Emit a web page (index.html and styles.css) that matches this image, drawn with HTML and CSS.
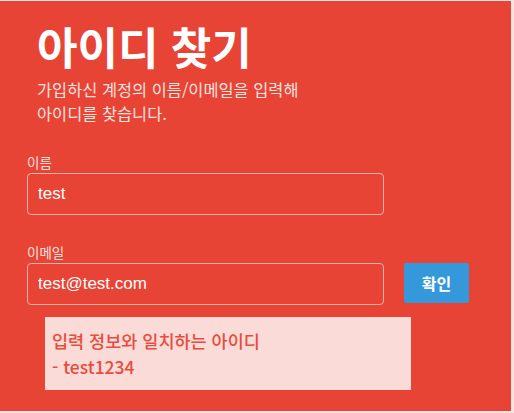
FILE: index.html
```html
<!DOCTYPE html>
<html lang="ko">
<head>
<meta charset="utf-8">
<link rel="stylesheet" href="styles.css">
</head>
<body>
<main class="page">
  <header class="head">
    <h1 class="title">아이디 찾기</h1>
    <p class="desc">가입하신 계정의 이름/이메일을 입력해<br>아이디를 찾습니다.</p>
  </header>
  <form class="form">
    <label class="field">
      <span class="label">이름</span>
      <span class="row"><input class="input" type="text" value="test"></span>
    </label>
    <label class="field">
      <span class="label">이메일</span>
      <span class="row"><input class="input" type="text" value="test@test.com"><button class="btn" type="button">확인</button></span>
    </label>
  </form>
  <div class="result">
    <p>입력 정보와 일치하는 아이디</p>
    <p>- test1234</p>
  </div>
</main>
</body>
</html>
```
FILE: styles.css
```css
html, body {
  margin: 0;
  padding: 0;
}
body {
  background: #f9e3e1;
  width: 514px;
  height: 413px;
  overflow: hidden;
  font-family: "Noto Sans CJK KR", "Noto Sans", sans-serif;
}
.page {
  width: 511px;
  height: 410px;
  margin-top: 1px;
  background: #e74436;
  box-sizing: border-box;
  padding: 20px 0 0 27px;
}
.head {
  padding-left: 10px;
}
.title {
  margin: 0;
  font-size: 44px;
  line-height: 50px;
  font-weight: 700;
  color: #ffffff;
}
.desc {
  margin: 6px 0 0;
  font-size: 16.4px;
  line-height: 24px;
  color: #fbe3df;
}
.form {
  margin-top: 28px;
  display: flex;
  flex-direction: column;
  gap: 28px;
}
.field {
  display: flex;
  flex-direction: column;
}
.label {
  font-size: 13.5px;
  line-height: 18px;
  color: #fbe0dc;
  margin-bottom: 2px;
}
.row {
  display: flex;
  align-items: flex-start;
  gap: 20px;
}
.input {
  width: 357px;
  height: 42px;
  box-sizing: border-box;
  border: 1px solid #f5b0a8;
  border-radius: 4px;
  background: transparent;
  padding: 0 10px;
  font-family: "Liberation Sans", Arial, sans-serif;
  font-size: 17px;
  color: #ffffff;
  outline: none;
}
.btn {
  width: 65px;
  height: 40px;
  border: none;
  border-radius: 2px;
  background: #3498db;
  color: #fff;
  font-family: "Noto Sans CJK KR", sans-serif;
  font-weight: 700;
  font-size: 16px;
  padding: 0;
}
.result {
  margin: 12px 0 0 18px;
  width: 366px;
  height: 73px;
  box-sizing: border-box;
  background: #fadbd8;
  padding: 11px 0 0 7px;
  color: #e74c3c;
  font-size: 17.5px;
  font-weight: 500;
  line-height: 26px;
}
.result p {
  margin: 0;
}
```
